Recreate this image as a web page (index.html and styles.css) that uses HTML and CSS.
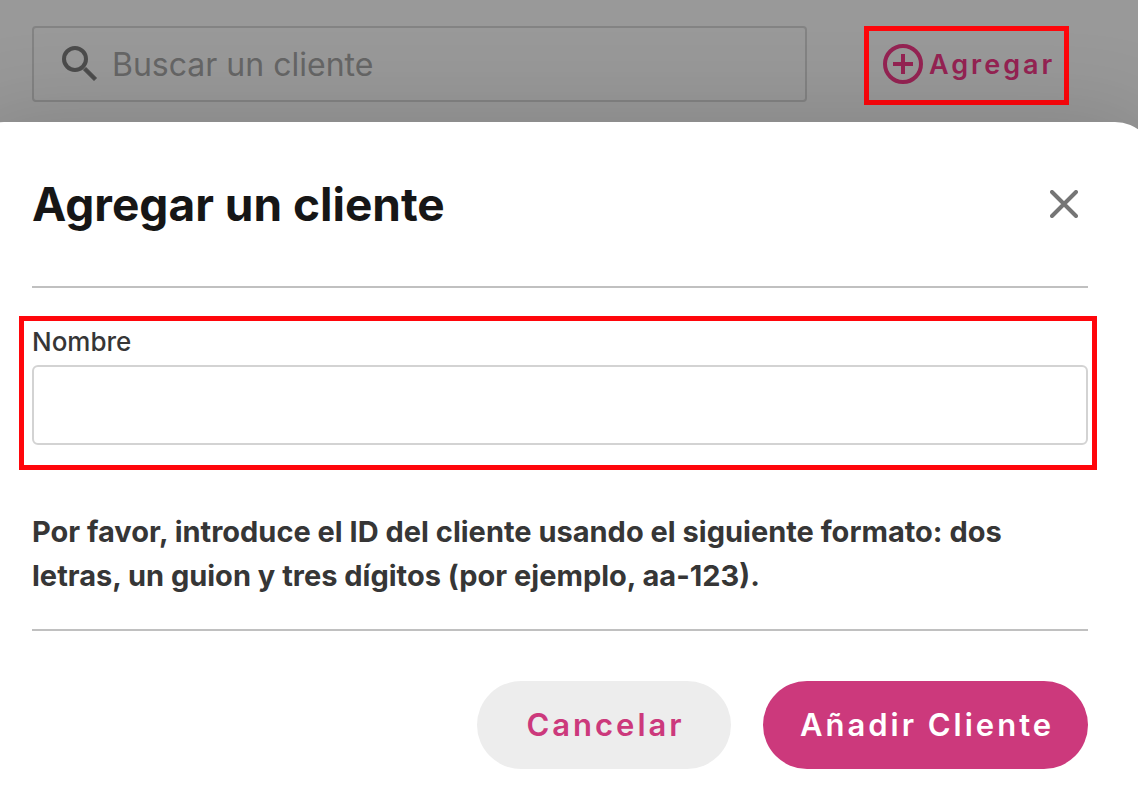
FILE: index.html
```html
<!DOCTYPE html>
<html lang="es">
<head>
<meta charset="utf-8">
<meta name="viewport" content="width=device-width, initial-scale=1">
<title>Agregar un cliente</title>
<link rel="stylesheet" href="styles.css">
</head>
<body>
<header class="toolbar">
  <label class="search">
    <svg class="search-icon" viewBox="0 0 36 36" aria-hidden="true"><circle cx="13" cy="13" r="11" fill="none" stroke="currentColor" stroke-width="4"/><path d="M21.5 24 24 21.5 34.5 32 32 34.5Z" fill="currentColor" stroke="currentColor"/></svg>
    <input class="search-input" type="search" placeholder="Buscar un cliente" aria-label="Buscar un cliente">
  </label>
  <button class="add" type="button">
    <svg class="add-icon" viewBox="0 0 40 40" fill="none" stroke="currentColor" stroke-width="4" aria-hidden="true"><circle cx="20" cy="20" r="18"/><path d="M10 20h20M20 10v20"/></svg>
    Agregar
  </button>
</header>
<form class="dialog" role="dialog" aria-labelledby="dialog-title">
  <div class="dialog-head">
    <h1 class="dialog-title" id="dialog-title">Agregar un cliente</h1>
    <button class="close" type="button" aria-label="Cerrar">
      <svg class="close-icon" viewBox="0 0 28 28" fill="none" stroke="currentColor" stroke-width="4" stroke-linecap="round" aria-hidden="true"><path d="M2 2l24 24M26 2l-24 24"/></svg>
    </button>
  </div>
  <div class="field">
    <label class="field-label" for="name">Nombre</label>
    <input class="field-input" id="name" type="text">
  </div>
  <p class="hint">Por favor, introduce el ID del cliente usando el siguiente formato: dos letras, un guion y tres dígitos (por ejemplo, aa-123).</p>
  <div class="actions">
    <button class="btn btn-cancel" type="button">Cancelar</button>
    <button class="btn btn-primary" type="submit">Añadir Cliente</button>
  </div>
</form>
</body>
</html>
```
FILE: styles.css
```css
* {
  box-sizing: border-box;
}

body {
  display: flex;
  flex-direction: column;
  min-height: 100vh;
  margin: 0;
  overflow-x: hidden;
  background: #999;
  font-family: Inter, Roboto, sans-serif;
}

button,
input {
  font: inherit;
}

button {
  cursor: pointer;
}

.toolbar {
  display: flex;
  align-items: flex-start;
  gap: 57px;
  padding: 26px 69px 17px 32px;
}

.search {
  display: flex;
  flex: 1;
  align-items: center;
  gap: 14px;
  min-width: 0;
  height: 76px;
  padding: 0 28px;
  border: 2px solid #838383;
  border-radius: 4px;
}

.search-icon {
  flex: none;
  width: 36px;
  height: 36px;
  color: #4c4c4c;
}

.search-input {
  flex: 1;
  min-width: 0;
  padding: 0;
  border: 0;
  outline: 0;
  background: none;
  color: #4c4c4c;
  font-size: 32px;
}

.search-input::placeholder {
  color: #666;
}

.add {
  display: flex;
  align-items: center;
  gap: 6px;
  min-width: 205px;
  height: 79px;
  padding: 0 8px 3px 14px;
  border: 5px solid #ff060b;
  background: none;
  color: #952353;
  font-size: 27px;
  font-weight: 600;
  letter-spacing: 3px;
}

.add-icon {
  flex: none;
  width: 40px;
  height: 40px;
}

.dialog {
  flex: 1;
  margin: 0 -17px 0 -36px;
  padding: 0 67px 33px 68px;
  border-radius: 40px 40px 0 0;
  background: #fff;
  box-shadow: 0 0 96px rgba(0, 0, 0, 0.16);
}

.dialog-head {
  display: flex;
  align-items: center;
  justify-content: space-between;
  padding: 56px 0;
  border-bottom: 2px solid #c0c0c0;
}

.dialog-title {
  margin: 0;
  color: #161616;
  font-size: 46px;
  font-weight: 700;
  line-height: 52px;
}

.close {
  display: flex;
  padding: 10px;
  border: 0;
  background: none;
  color: #757575;
}

.close-icon {
  width: 28px;
  height: 28px;
}

.field {
  display: flex;
  flex-direction: column;
  gap: 7px;
  margin: 28px -9px 0 -13px;
  padding: 5px 4px 20px 8px;
  border: 5px solid #ff060b;
}

.field-label {
  color: #363636;
  font-size: 26px;
  font-weight: 500;
  line-height: 32px;
}

.field-input {
  width: 100%;
  height: 80px;
  padding: 0 24px;
  border: 2px solid #d3d3d3;
  border-radius: 6px;
  background: #fff;
  color: #363636;
  font-size: 32px;
}

.hint {
  margin: 40px 0 31px;
  color: #363636;
  font-size: 29px;
  font-weight: 700;
  line-height: 44px;
}

.actions {
  display: flex;
  justify-content: flex-end;
  gap: 32px;
  padding-top: 50px;
  border-top: 2px solid #c0c0c0;
}

.btn {
  height: 88px;
  padding: 0 32px 2px 35px;
  border: 0;
  border-radius: 44px;
  font-size: 31px;
  font-weight: 600;
  letter-spacing: 3px;
}

.btn-cancel {
  min-width: 254px;
  background: #ededed;
  color: #cc397c;
}

.btn-primary {
  min-width: 325px;
  background: #cc397c;
  color: #fff;
}
```
